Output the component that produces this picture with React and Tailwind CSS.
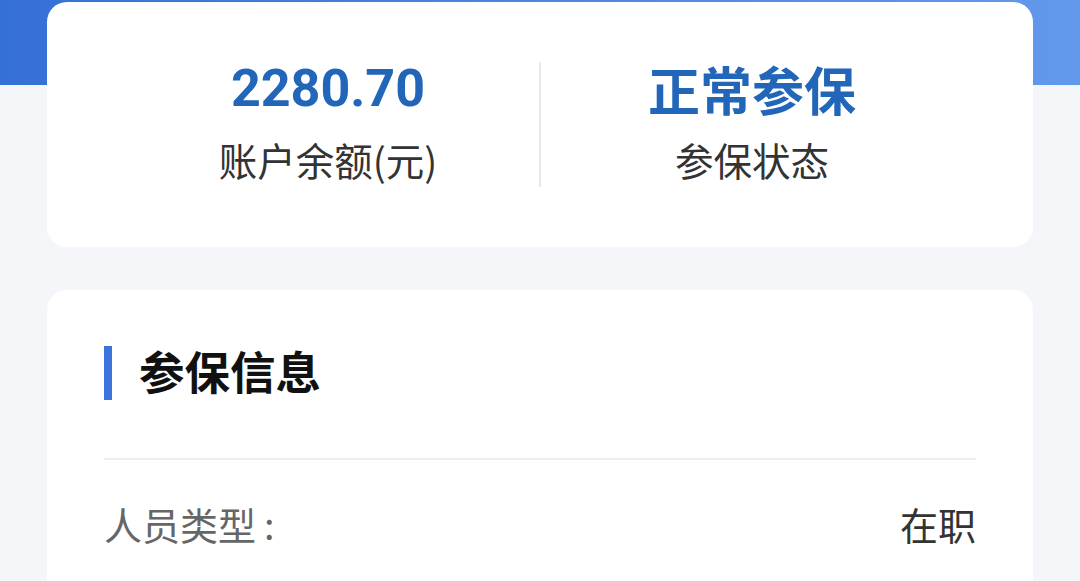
export default function App() {
  const cjk = { fontFamily: '"Noto Sans CJK SC", "Noto Sans", sans-serif' };
  return (
    <div className="relative w-full h-[581px] overflow-hidden bg-[#f5f6fa]" style={cjk}>
      <div className="absolute left-0 top-0 w-full h-[85px] bg-gradient-to-r from-[#3570d6] to-[#6399ec]" />
      <div className="relative px-[47px] pt-[2px]">
        <div className="h-[245px] rounded-[20px] bg-white flex items-center px-[70px]">
          <div className="flex-1 flex flex-col items-center mb-[8px]">
            <div className="text-[52px] leading-[62px] font-bold text-[#2166b8] font-['Roboto',sans-serif]">2280.70</div>
            <div className="mt-[14px] text-[38.5px] leading-[50px] text-[#333333]">账户余额(元)</div>
          </div>
          <div className="w-[2px] h-[125px] bg-[#e9e9e9]" />
          <div className="flex-1 flex flex-col items-center mb-[8px]">
            <div className="text-[52px] leading-[62px] font-bold text-[#2166b8]">正常参保</div>
            <div className="mt-[14px] text-[38.5px] leading-[50px] text-[#333333]">参保状态</div>
          </div>
        </div>
        <div className="mt-[43px] rounded-[20px] bg-white px-[57px] pt-[56px] h-[400px]">
          <div className="flex items-start">
            <div className="w-[8px] h-[54px] bg-[#3b73dc]" />
            <div className="ml-[27px] text-[45.5px] leading-[48px] font-bold text-[#111111]">参保信息</div>
          </div>
          <div className="mt-[58px] h-[2px] bg-[#eeeeee]" />
          <div className="mt-[39px] flex items-center justify-between">
            <div className="text-[38px] leading-[50px] text-[#666666]">人员类型<span className="ml-[8px]">:</span></div>
            <div className="text-[38px] leading-[50px] text-[#333333]">在职</div>
          </div>
        </div>
      </div>
    </div>
  );
}
